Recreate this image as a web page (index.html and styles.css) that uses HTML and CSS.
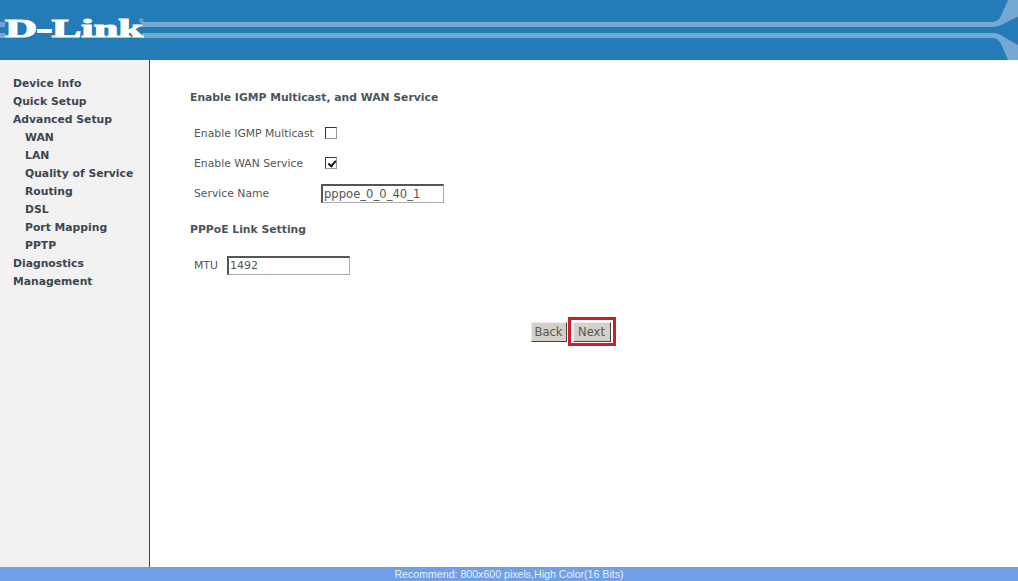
FILE: index.html
```html
<!DOCTYPE html>
<html lang="en">
<head>
<meta charset="utf-8">
<title>D-Link</title>
<link rel="stylesheet" href="styles.css">
</head>
<body>
<div class="page">
  <header class="banner">
    <svg class="banner-art" width="1018" height="60" viewBox="0 0 1018 60" aria-hidden="true">
      <path class="stripe" d="M0 22H990C996 22 999 20 1001 16L1008 0H1018V17C1010 20 1006 23 1000 25.5C997 26.7 994 27 990 27H0Z"/>
      <path class="stripe" d="M0 33H993C997 33 1000 34.5 1004 37L1018 45V60H1008L1002 46C1000 41 997 38 992 38H0Z"/>
      <rect class="logo-gap" x="5" y="20" width="137" height="19"/>
      <text class="logo" x="5" y="36.5" textLength="138" lengthAdjust="spacingAndGlyphs">D<tspan class="logo-dash">-</tspan>Link</text>
      <text class="logo-mark" x="139" y="23">®</text>
    </svg>
  </header>
  <div class="middle">
    <nav class="side">
      <a>Device Info</a>
      <a>Quick Setup</a>
      <a>Advanced Setup</a>
      <a class="sub">WAN</a>
      <a class="sub">LAN</a>
      <a class="sub">Quality of Service</a>
      <a class="sub">Routing</a>
      <a class="sub">DSL</a>
      <a class="sub">Port Mapping</a>
      <a class="sub">PPTP</a>
      <a>Diagnostics</a>
      <a>Management</a>
    </nav>
    <main class="content">
      <h1 class="title">Enable IGMP Multicast, and WAN Service</h1>
      <div class="row row-igmp"><label class="lbl">Enable IGMP Multicast</label><input class="chk" type="checkbox"></div>
      <div class="row row-wan"><label class="lbl">Enable WAN Service</label><input class="chk" type="checkbox" checked></div>
      <div class="row row-name"><label class="lbl lbl-name">Service Name</label><input class="txt txt-name" type="text" value="pppoe_0_0_40_1"></div>
      <h2 class="title title-link">PPPoE Link Setting</h2>
      <div class="row row-mtu"><label class="lbl lbl-mtu">MTU</label><input class="txt txt-mtu" type="text" value="1492"></div>
      <div class="actions">
        <button class="btn btn-back" type="button">Back</button>
        <span class="focus"><button class="btn btn-next" type="button">Next</button></span>
      </div>
    </main>
  </div>
  <footer class="foot">Recommend: 800x600 pixels,High Color(16 Bits)</footer>
</div>
</body>
</html>
```
FILE: styles.css
```css
* { box-sizing: border-box; }
html, body { margin: 0; height: 100%; }
body { background: #fff; font-family: "DejaVu Sans", sans-serif; overflow: hidden; }
.page { width: 1018px; height: 581px; display: flex; flex-direction: column; }
.banner { height: 60px; background: #237cb5; flex: none; }
.banner-art { display: block; }
.stripe { fill: #75a8d3; }
.logo-gap { fill: #237cb5; }
.logo { font-family: "Liberation Serif", serif; font-weight: 700; font-size: 25px; fill: #fff; stroke: #fff; stroke-width: 1.1px; }
.logo-dash { stroke-width: 1.8px; }
.logo-mark { font-family: "Liberation Sans", sans-serif; font-size: 6px; fill: #cfe0ee; }
.middle { flex: 1; display: flex; min-height: 0; }
.side { width: 150px; flex: none; background: #f2f2f2; border-right: 1px solid #b0123c; padding: 15px 0 0 13px; display: flex; flex-direction: column; }
.side a { height: 18px; line-height: 18px; font-size: 10.8px; font-weight: 700; color: #3c4650; white-space: nowrap; }
.side .sub { padding-left: 12px; }
.content { flex: 1; padding: 30px 0 0 40px; color: #555; }
.title { margin: 0; font-size: 10.8px; line-height: 16px; font-weight: 700; color: #4b5560; }
.row { display: flex; align-items: center; height: 20px; padding-left: 4px; }
.row-igmp { margin-top: 18px; }
.row-wan { margin-top: 10px; }
.row-name { margin-top: 10px; }
.lbl { font-size: 10.8px; color: #555; width: 131px; margin-bottom: 2px; white-space: nowrap; }
.lbl-name { width: 127px; }
.lbl-mtu { width: 33px; margin-bottom: 0; }
.chk { margin: 0 0 2px; width: 12px; height: 12px; appearance: none; border: 1px solid #333; border-right-color: #999; border-bottom-color: #999; background: #fff; position: relative; }
.chk:checked::after { content: ""; position: absolute; left: 2px; top: 1px; width: 6px; height: 3px; border-left: 2px solid #111; border-bottom: 2px solid #111; transform: rotate(-50deg) translate(-1px, 1px); }
.txt { margin: 0; height: 19px; padding: 0 1px; border: 1px solid #aaa; border-top: 2px solid #555; border-left: 2px solid #555; background: #fff; font: 11px "DejaVu Sans", sans-serif; color: #555; }
.txt-name { width: 123px; margin-bottom: 2px; font-size: 11.6px; }
.txt-mtu { width: 123px; }
.title-link { margin-top: 18px; }
.row-mtu { margin-top: 17px; }
.actions { display: flex; justify-content: center; align-items: center; gap: 1px; margin-top: 42px; padding-right: 62px; }
.btn { height: 20px; padding: 0; border: 1px solid; border-color: #eee #444 #444 #eee; background: #d4d0c8; font: 11.5px "DejaVu Sans", sans-serif; color: #555; }
.btn-back { width: 36px; }
.btn-next { width: 38px; }
.focus { display: flex; align-items: center; justify-content: center; width: 48px; height: 29px; border: 3px solid #d01c2c; }
.foot { height: 14px; flex: none; background: #6f9fe6; color: #e8eef8; font: 10.6px/15px "Liberation Sans", sans-serif; text-align: center; }
```
